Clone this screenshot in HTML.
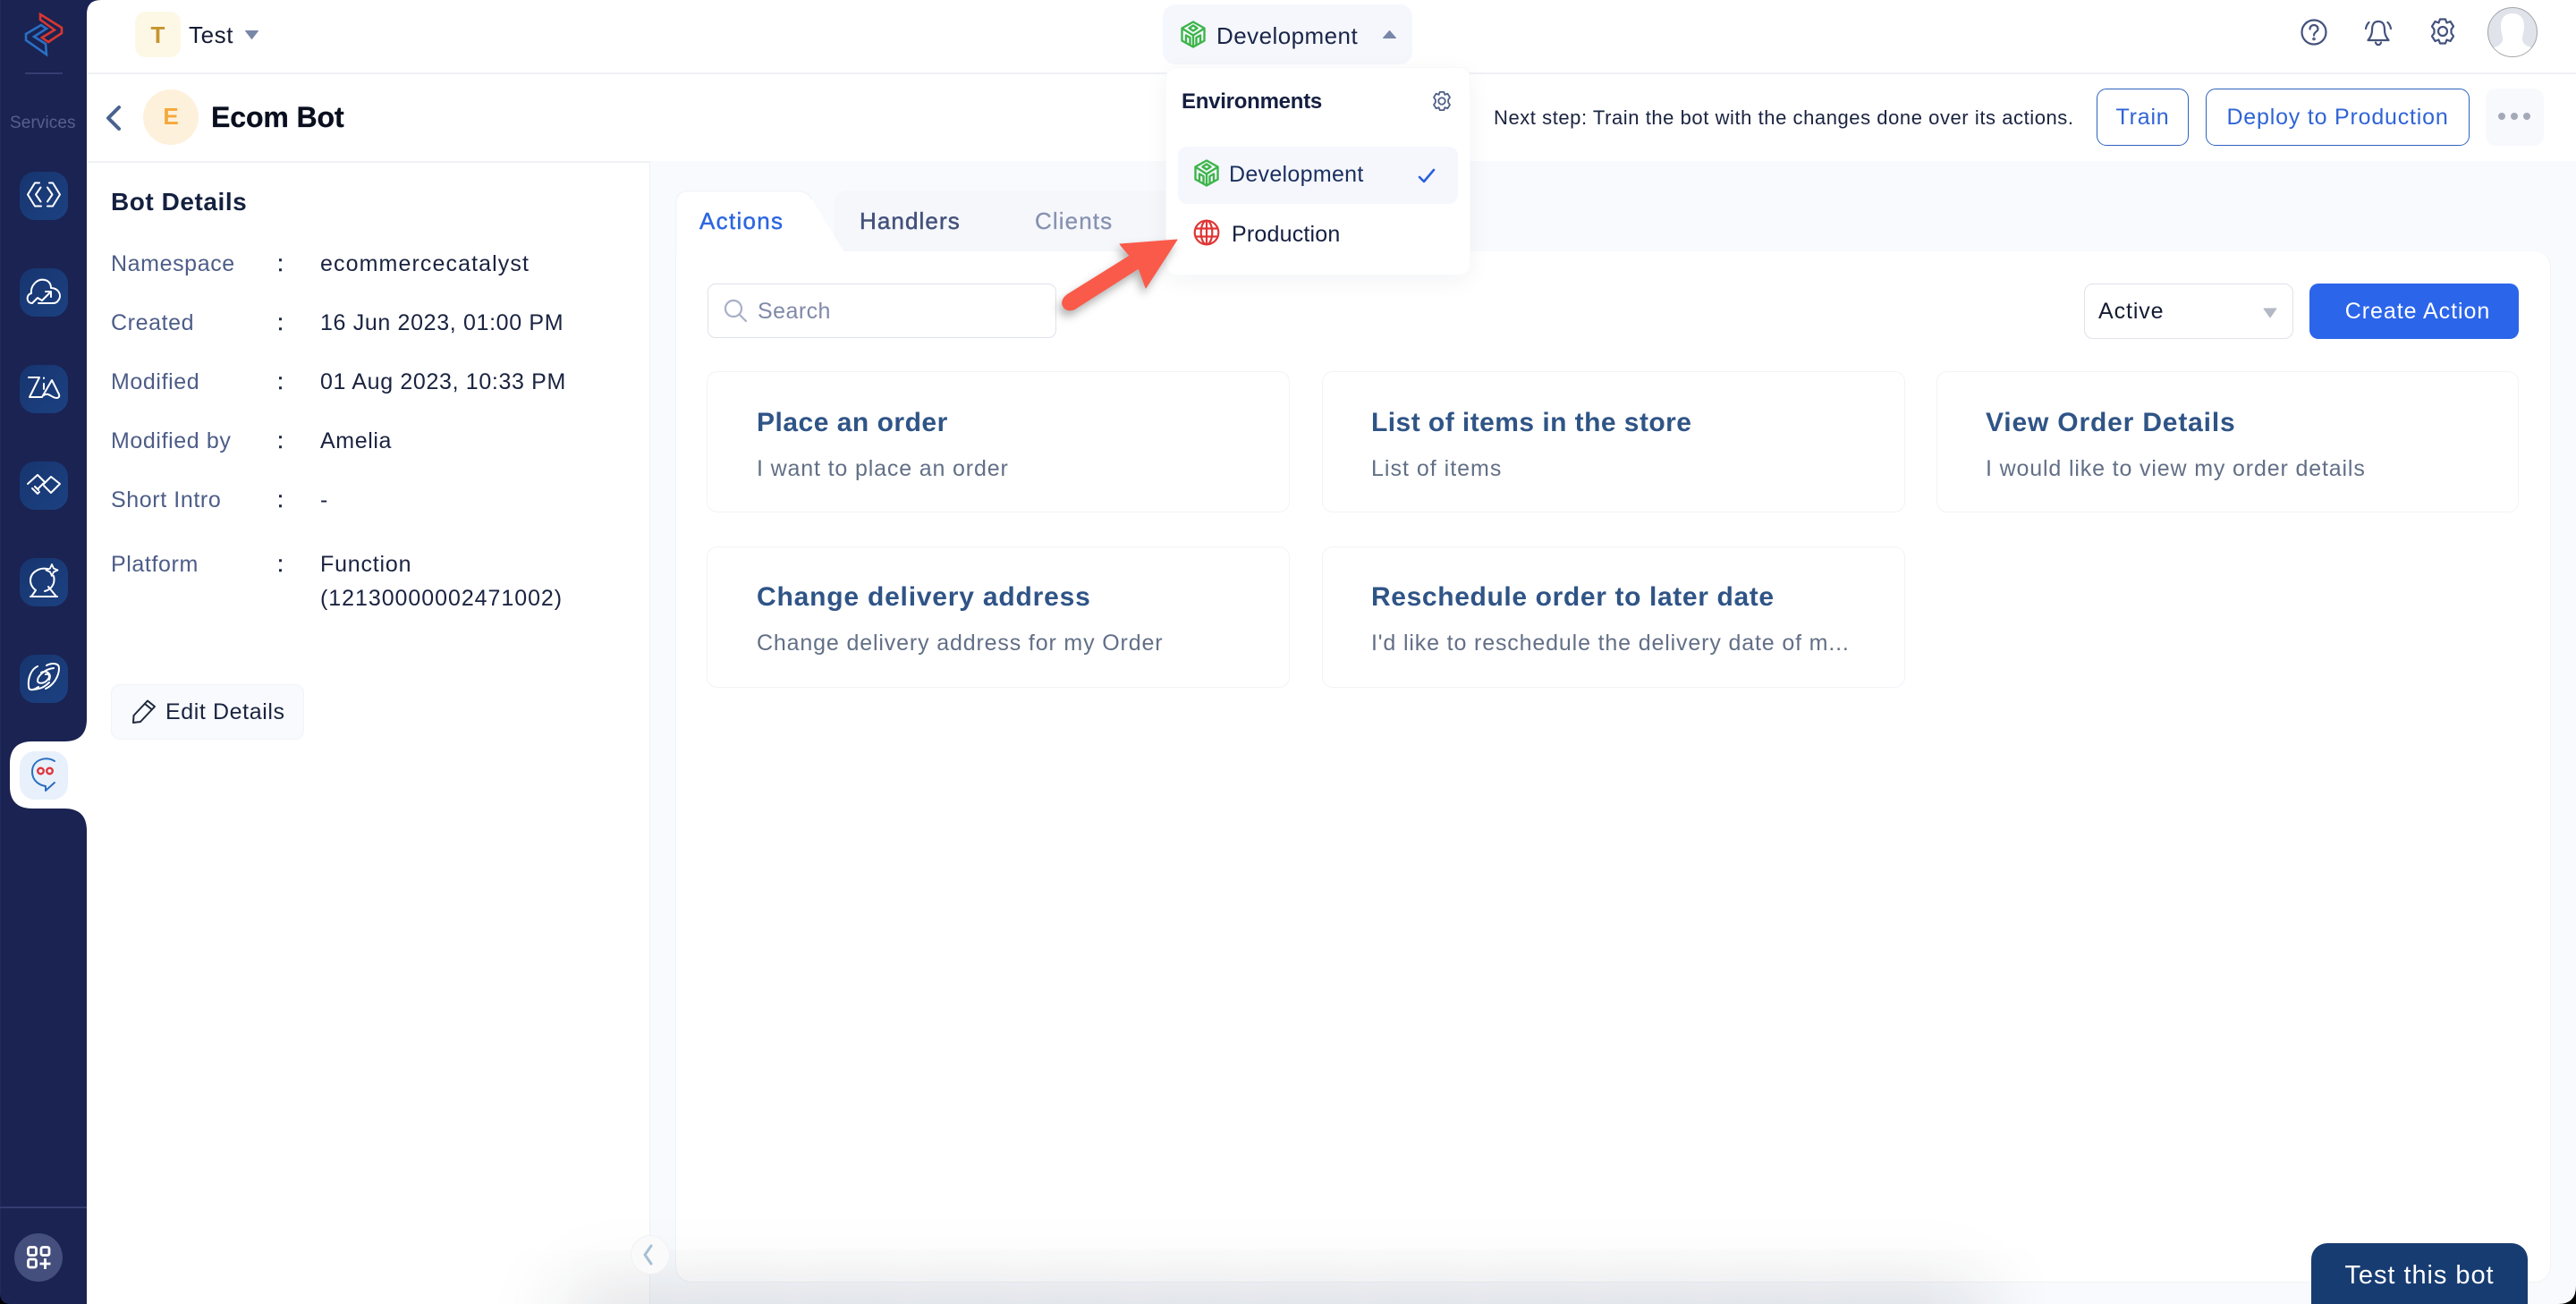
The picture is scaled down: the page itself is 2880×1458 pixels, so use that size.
<!DOCTYPE html>
<html><head><meta charset="utf-8"><title>Ecom Bot</title>
<style>
*{box-sizing:border-box;margin:0;padding:0}
html,body{width:2880px;height:1458px;overflow:hidden;background:#fff}
body{position:relative;font-family:"Liberation Sans",Arial,sans-serif;color:#1a2340}
.a{position:absolute}
.t{position:absolute;white-space:nowrap;height:40px;line-height:40px;font-size:25px;letter-spacing:.6px}
.l{color:#4d5d88;left:124px}
.c{left:310px;color:#1a2340;letter-spacing:0;-webkit-text-stroke:.5px #1a2340}
.v{left:358px;color:#1a2340}
.tile{position:absolute;left:22px;width:54px;height:54px;border-radius:17px;background:linear-gradient(135deg,#17356f,#1c4181)}
.tile svg{position:absolute;left:0;top:0;fill:none;stroke:#fff;stroke-width:2;stroke-linejoin:round;stroke-linecap:round}
.card{position:absolute;width:652px;height:158px;border:1.5px solid #f1f3f7;border-radius:12px;background:#fff}
.h{color:#2f5486;font-weight:bold;font-size:30px;letter-spacing:.5px}
.s{color:#626f86;font-size:25px;letter-spacing:.85px}
.btn{position:absolute;border:1.5px solid #2e62bf;border-radius:11px;background:#fff;color:#2f64d6;text-align:center;font-size:25px;letter-spacing:.8px;height:64px;line-height:63px;top:99px}
</style></head><body>

<!-- right strip and content bg -->
<div class="a" style="left:726px;top:180px;width:2154px;height:1278px;background:#f8fafd;border-left:1.5px solid #eff1f6"></div>
<div class="a" style="left:97px;top:180px;width:629px;height:1278px;background:#fff"></div>

<!-- tabs -->
<div class="a" style="left:933px;top:213px;width:370px;height:68px;background:#f5f7fb;border-radius:14px 0 0 0"></div>
<!-- main card -->
<div class="a" style="left:755px;top:281px;width:2097px;height:1153px;background:#fff;border-radius:0 18px 18px 18px;border:1.5px solid #f0f2f6;border-top:none"></div>
<svg class="a" style="left:750px;top:208px" width="210" height="80"><path d="M5 76V20Q5 5 20 5H142Q153 5 158 15L195 76Z" fill="#fff" stroke="none"/><path d="M5.7 76V20Q5.7 5.7 20 5.7H142Q153 5.7 158 15" fill="none" stroke="#f2f4f8" stroke-width="1.5"/></svg>
<div class="t" style="left:782px;top:227px;font-size:26px;letter-spacing:1.3px;color:#2b65e0;-webkit-text-stroke:.4px #2b65e0">Actions</div>
<div class="t" style="left:961px;top:227px;font-size:26px;letter-spacing:1.1px;color:#44527c;-webkit-text-stroke:.5px #44527c">Handlers</div>
<div class="t" style="left:1157px;top:227px;font-size:26px;letter-spacing:1.1px;color:#8791b0;-webkit-text-stroke:.3px #8791b0">Clients</div>

<!-- search -->
<div class="a" style="left:791px;top:317px;width:390px;height:61px;border:1.5px solid #dfe2ea;border-radius:9px;background:#fff"></div>
<svg class="a" style="left:808px;top:333px" width="28" height="28" fill="none" stroke="#a9afc6" stroke-width="2.2" stroke-linecap="round"><circle cx="12" cy="12" r="9"/><path d="M19 19L26 26"/></svg>
<div class="t" style="left:847px;top:328px;color:#8089a8;font-size:25px;letter-spacing:.45px">Search</div>

<!-- select + create -->
<div class="a" style="left:2330px;top:317px;width:234px;height:62px;border:1.5px solid #dfe2ea;border-radius:10px;background:#fff"></div>
<div class="t" style="left:2346px;top:328px;color:#141c33;font-size:25px;letter-spacing:.9px">Active</div>
<svg class="a" style="left:2530px;top:344px" width="16" height="12"><path d="M1 1H15L8 11Z" fill="#b4b8c4" stroke="#b4b8c4" stroke-linejoin="round"/></svg>
<div class="a" style="left:2582px;top:317px;width:234px;height:62px;background:#2b65ea;border-radius:10px;color:#fff;text-align:center;line-height:63px;font-size:25px;letter-spacing:.95px;padding-left:8px">Create Action</div>

<!-- cards -->
<div class="card" style="left:790px;top:415px"></div>
<div class="card" style="left:1478px;top:415px"></div>
<div class="card" style="left:2165px;top:415px;width:651px"></div>
<div class="card" style="left:790px;top:611px"></div>
<div class="card" style="left:1478px;top:611px"></div>
<div class="t h" style="left:846px;top:453px;letter-spacing:.5px">Place an order</div>
<div class="t s" style="left:846px;top:504px">I want to place an order</div>
<div class="t h" style="left:1533px;top:453px;letter-spacing:.45px">List of items in the store</div>
<div class="t s" style="left:1533px;top:504px;letter-spacing:1px">List of items</div>
<div class="t h" style="left:2220px;top:453px;letter-spacing:.83px">View Order Details</div>
<div class="t s" style="left:2220px;top:504px">I would like to view my order details</div>
<div class="t h" style="left:846px;top:648px;letter-spacing:.8px">Change delivery address</div>
<div class="t s" style="left:846px;top:699px">Change delivery address for my Order</div>
<div class="t h" style="left:1533px;top:648px;letter-spacing:.63px">Reschedule order to later date</div>
<div class="t s" style="left:1533px;top:699px">I'd like to reschedule the delivery date of m...</div>

<!-- bottom shadow -->
<div class="a" style="left:0;top:1300px;width:2880px;height:158px;overflow:hidden;pointer-events:none"><div class="a" style="left:680px;top:190px;width:1490px;height:30px;box-shadow:0 0 90px 45px rgba(30,35,55,.17);background:rgba(30,35,55,.17)"></div></div>

<!-- collapse -->
<div class="a" style="left:705px;top:1381px;width:44px;height:44px;border-radius:50%;background:#fafafb;border:1px solid #f0f1f4"></div>
<svg class="a" style="left:716px;top:1390px" width="20" height="26" fill="none" stroke="#a5bfd6" stroke-width="3" stroke-linecap="round" stroke-linejoin="round"><path d="M12 3L5 13L12 23"/></svg>

<!-- top header -->
<div class="a" style="left:97px;top:0;width:2783px;height:180px;background:#fff"></div>
<div class="a" style="left:97px;top:81px;width:2783px;height:1.5px;background:#eff1f5"></div>
<div class="a" style="left:97px;top:180px;width:629px;height:1.5px;background:#eff1f5"></div>
<div class="a" style="left:151px;top:13px;width:51px;height:51px;border-radius:12px;background:#fdf8e6;color:#c6952f;font-weight:bold;font-size:26px;text-align:center;line-height:52px">T</div>
<div class="t" style="left:211px;top:19px;font-size:26px;letter-spacing:.6px;color:#141c33">Test</div>
<svg class="a" style="left:273px;top:33px" width="17" height="12"><path d="M1.5 1.5H15.5L8.5 10.5Z" fill="#7886a8" stroke="#7886a8" stroke-linejoin="round"/></svg>

<svg class="a" style="left:116px;top:116px" width="22" height="32" fill="none" stroke="#4a638f" stroke-width="4" stroke-linecap="round" stroke-linejoin="round"><path d="M17 4L5 16L17 28"/></svg>
<div class="a" style="left:160px;top:100px;width:62px;height:62px;border-radius:50%;background:#fdf1dc;color:#f5a83a;font-weight:bold;font-size:26px;text-align:center;line-height:60px">E</div>
<div class="t" style="left:236px;top:111px;font-size:32px;font-weight:bold;letter-spacing:-.1px;color:#0a0f1f;-webkit-text-stroke:.3px #0a0f1f">Ecom Bot</div>

<!-- env button -->
<div class="a" style="left:1300px;top:5px;width:279px;height:67px;background:#f5f7fd;border-radius:14px"></div>
<svg class="a" style="left:1320px;top:23px" width="28" height="31" viewBox="0 0 28 31" fill="none" stroke="#3db54a" stroke-width="2.4" stroke-linejoin="round"><path d="M14 1.5L26.5 8.5V22.5L14 29.5L1.5 22.5V8.5Z"/><path d="M14 5.5L18.5 8.5L14 11.5L9.5 8.5Z"/><path d="M2 9L14 16.5L26 9M14 16.5V29M6 25V16.5L10.5 19V27.5M22 25V16.5L17.5 19V27.5"/></svg>
<div class="t" style="left:1360px;top:20px;font-size:26px;letter-spacing:.45px;color:#1a2547">Development</div>
<svg class="a" style="left:1545px;top:33px" width="17" height="11"><path d="M1.5 9.5H15.5L8.5 1.5Z" fill="#7886a8" stroke="#7886a8" stroke-linejoin="round"/></svg>

<!-- next step -->
<div class="t" style="left:1670px;top:112px;font-size:22px;letter-spacing:.56px;color:#1a2340">Next step: Train the bot with the changes done over its actions.</div>
<div class="btn" style="left:2344px;width:103px">Train</div>
<div class="btn" style="left:2466px;width:295px">Deploy to Production</div>
<div class="a" style="left:2779px;top:99px;width:65px;height:64px;border-radius:11px;background:#f8f9fc"></div>
<div class="a" style="left:2793px;top:126px;width:8px;height:8px;border-radius:50%;background:#a4a9b8"></div>
<div class="a" style="left:2807px;top:126px;width:8px;height:8px;border-radius:50%;background:#a4a9b8"></div>
<div class="a" style="left:2821px;top:126px;width:8px;height:8px;border-radius:50%;background:#a4a9b8"></div>

<!-- top right icons -->
<svg class="a" style="left:2571px;top:20px" width="32" height="32" fill="none" stroke="#44527c" stroke-width="2.2" stroke-linecap="round"><circle cx="16" cy="16" r="13.5"/><path d="M11.5 12.5C11.5 6.5 20.5 6.5 20.5 12.5C20.5 15.5 16 15.5 16 19.5"/><circle cx="16" cy="23.5" r=".7"/></svg>
<svg class="a" style="left:2643px;top:20px" width="32" height="32" fill="none" stroke="#44527c" stroke-width="2.2" stroke-linecap="round" stroke-linejoin="round"><path d="M16 4C10 4 9 9 9 14C9 19 7 22 4.5 25H27.5C25 22 23 19 23 14C23 9 22 4 16 4Z"/><path d="M13 27.5C14 31 18 31 19 27.5M5.5 5C3.5 7 2.5 9 2 12M26.5 5C28.5 7 29.5 9 30 12"/></svg>
<svg class="a" style="left:2715px;top:19px" width="32" height="32" viewBox="0 0 32 32" fill="none" stroke="#44527c" stroke-width="2.2" stroke-linejoin="round"><path d="M13 2.5H19L20.5 6.5L24.5 5L28 10.5L25.5 14V18L28 21.5L24.5 27L20.5 25.5L19 29.5H13L11.5 25.5L7.5 27L4 21.5L6.5 18V14L4 10.5L7.5 5L11.5 6.5Z"/><circle cx="16" cy="16" r="5"/></svg>
<div class="a" style="left:2781px;top:8px;width:56px;height:56px;border-radius:50%;border:1.2px solid #a2a4aa;background:#e0e3ea;overflow:hidden">
<svg width="54" height="54" style="display:block"><path d="M27 6C18 6 14 12 14 20C14 28 17 33 16 36C15 40 11 43 6 44V56H48V44C43 43 39 40 38 36C37 33 40 28 40 20C40 12 36 6 27 6Z" fill="#fff"/></svg></div>

<!-- sidebar -->
<svg class="a" style="left:0;top:0" width="97" height="1458"><path d="M0 0H97V804Q97 829 72 829H36Q11 829 11 854V879Q11 904 36 904H72Q97 904 97 929V1458H0Z" fill="#1a2352"/><path d="M0 0V1458" stroke="#202b5e" stroke-width="2"/></svg>
<svg class="a" style="left:97px;top:0" width="16" height="16"><path d="M0 0H16Q0 0 0 16Z" fill="#1a2352"/></svg>
<svg class="a" style="left:20px;top:10px" width="60" height="58" fill="none" stroke-width="2.6" stroke-linejoin="miter"><path d="M25 6L49 21V27L34 37L27 32L41 23.5L25 12Z" stroke="#d9362f"/><path d="M9 28L26 18L32 22L18 31L31 39L32 51L9 35Z" stroke="#2a6fc4"/></svg>
<div class="a" style="left:28px;top:81px;width:42px;height:1.5px;background:#343e70"></div>
<div class="t" style="left:11px;top:118px;font-size:19px;letter-spacing:.1px;color:#56608f">Services</div>

<div class="tile" style="top:192px"><svg width="54" height="54"><path d="M22 12.5H17L9 25.5L17 38.5H24M33 12.5H37L45 25.5L37 38.5H31M23.5 17.5L18 25.5L23.5 33.5M31 17.5L36.5 25.5L31 33.5"/></svg></div>
<div class="tile" style="top:300px"><svg width="54" height="54"><path d="M14 39C7 39 7 29 13 28C12 20 19 11 28 13C33 14 35 18 35 22C43 22 48 30 43 36C42 38 40 39 37 39H21M14 39L20 33L25 36L34 27M29 26H35V32"/></svg></div>
<div class="tile" style="top:408px"><svg width="54" height="54"><path d="M10 14H22L11 36H24M27 21L27 27M27 14.5V15M25 36L36 17L44 33C45 36 43 37 41 37C36 37 32 30 27 34"/></svg></div>
<div class="tile" style="top:516px"><svg width="54" height="54"><path d="M9 25L20 15L28 23L21 30M27 25L35 17L45 25L35 35L27 27M14 30L18 34M17 28L21 32M20 36L22 34M17 33L20 36"/></svg></div>
<div class="tile" style="top:624px"><svg width="54" height="54"><path d="M31 12C22 10 12 16 12 25C12 30 15 34 18 36M38 20C40 28 36 35 28 37M13 43L18 36M41 43L32 32M12 43H42"/><path d="M36 7L38 11.5L42.5 13.5L38 15.5L36 20L34 15.5L29.5 13.5L34 11.5Z" stroke-width="1.8"/></svg></div>
<div class="tile" style="top:732px"><svg width="54" height="54"><path d="M30 12C36 9 44 9 44 15C44 24 38 34 29 38M20 13C13 16 9 26 10 35C10 41 15 40 21 36M38 15C28 16 20 24 20 29C20 33 28 33 32 27C34 24 33 21 29 22M24 20C30 17 36 21 33 28M16 39C24 38 28 36 33 31"/></svg></div>
<div class="tile" style="top:840px;background:#e8f0fb"><svg width="54" height="54" style="stroke:#2a6fc0"><path d="M39 11C30 5 14 9 14 23C14 33 22 38 29 39L29 44L39 35"/><circle cx="23.5" cy="22" r="3.3" stroke="#e0343a" stroke-width="2.4"/><circle cx="33.5" cy="22" r="3.3" stroke="#e0343a" stroke-width="2.4"/></svg></div>

<div class="a" style="left:0;top:1349px;width:97px;height:1.5px;background:#343e70"></div>
<div class="a" style="left:16px;top:1379px;width:54px;height:54px;border-radius:50%;background:#454f7d"></div>
<svg class="a" style="left:16px;top:1379px" width="54" height="54" fill="none" stroke="#fff" stroke-width="2.8"><rect x="15.5" y="15.5" width="9" height="9" rx="2"/><rect x="30" y="15.5" width="9" height="9" rx="2"/><rect x="15.5" y="29" width="9" height="9" rx="2"/><path d="M34.5 28V40M28.5 34H40.5"/></svg>

<!-- dropdown -->
<div class="a" style="left:1303px;top:75px;width:341px;height:233px;background:#fff;border-radius:12px;box-shadow:0 6px 26px rgba(25,35,70,.05);border:1px solid #f8f9fb"></div>
<div class="t" style="left:1321px;top:94px;font-size:24px;font-weight:bold;letter-spacing:-.25px;color:#141f40">Environments</div>
<svg class="a" style="left:1600px;top:101px" width="24" height="24" viewBox="0 0 32 32" fill="none" stroke="#4f5f86" stroke-width="2.4" stroke-linejoin="round"><path d="M13 2.5H19L20.5 6.5L24.5 5L28 10.5L25.5 14V18L28 21.5L24.5 27L20.5 25.5L19 29.5H13L11.5 25.5L7.5 27L4 21.5L6.5 18V14L4 10.5L7.5 5L11.5 6.5Z"/><circle cx="16" cy="16" r="5"/></svg>
<div class="a" style="left:1317px;top:164px;width:313px;height:64px;background:#f5f7fd;border-radius:10px"></div>
<svg class="a" style="left:1335px;top:178px" width="28" height="31" viewBox="0 0 28 31" fill="none" stroke="#3db54a" stroke-width="2.4" stroke-linejoin="round"><path d="M14 1.5L26.5 8.5V22.5L14 29.5L1.5 22.5V8.5Z"/><path d="M14 5.5L18.5 8.5L14 11.5L9.5 8.5Z"/><path d="M2 9L14 16.5L26 9M14 16.5V29M6 25V16.5L10.5 19V27.5M22 25V16.5L17.5 19V27.5"/></svg>
<div class="t" style="left:1374px;top:175px;font-size:25px;letter-spacing:.3px;color:#1a2f5f">Development</div>
<svg class="a" style="left:1584px;top:187px" width="22" height="20" fill="none" stroke="#2b5fe0" stroke-width="2.6" stroke-linecap="round" stroke-linejoin="round"><path d="M3 11L8 16L19 3"/></svg>
<svg class="a" style="left:1334px;top:245px" width="30" height="30" fill="none" stroke="#df3535" stroke-width="2.2"><circle cx="15" cy="15" r="13.3"/><ellipse cx="15" cy="15" rx="6.3" ry="13.3"/><path d="M2 10.5H28M2 19.5H28M15 2V28"/></svg>
<div class="t" style="left:1377px;top:242px;font-size:25px;letter-spacing:.2px;color:#141f40">Production</div>

<!-- arrow -->
<svg class="a" style="left:1170px;top:250px;filter:drop-shadow(-3px 6px 5px rgba(60,60,60,.4))" width="160" height="120"><path d="M146 18L82 23L93 36L24 79C18 83 16 89 19 93C22 98 29 98 34 94L103 50L111 72Z" fill="#fa5a4a" stroke="#fa5a4a" stroke-linejoin="round"/></svg>

<!-- left details -->
<div class="t" style="left:124px;top:206px;font-size:28px;font-weight:bold;letter-spacing:.55px;color:#14203f">Bot Details</div>
<div class="t l" style="top:275px">Namespace</div><div class="t c" style="top:275px">:</div><div class="t v" style="top:275px;letter-spacing:1.1px">ecommercecatalyst</div>
<div class="t l" style="top:341px">Created</div><div class="t c" style="top:341px">:</div><div class="t v" style="top:341px;letter-spacing:.65px">16 Jun 2023, 01:00 PM</div>
<div class="t l" style="top:407px">Modified</div><div class="t c" style="top:407px">:</div><div class="t v" style="top:407px;letter-spacing:.65px">01 Aug 2023, 10:33 PM</div>
<div class="t l" style="top:473px">Modified by</div><div class="t c" style="top:473px">:</div><div class="t v" style="top:473px">Amelia</div>
<div class="t l" style="top:539px">Short Intro</div><div class="t c" style="top:539px">:</div><div class="t v" style="top:539px">-</div>
<div class="t l" style="top:611px">Platform</div><div class="t c" style="top:611px">:</div><div class="t v" style="top:611px;letter-spacing:.8px">Function</div>
<div class="t v" style="top:649px;letter-spacing:.95px">(12130000002471002)</div>
<div class="a" style="left:124px;top:765px;width:216px;height:62px;background:#f8fafd;border:1.5px solid #f1f3f8;border-radius:10px"></div>
<svg class="a" style="left:146px;top:780px" width="30" height="30" fill="none" stroke="#20283c" stroke-width="2" stroke-linejoin="round"><path d="M3 28L3.5 20L19 3.5L27 10L11 27Z"/><path d="M16 7L24 13.5"/></svg>
<div class="t" style="left:185px;top:776px;font-size:25px;letter-spacing:.6px;color:#1a2340">Edit Details</div>

<!-- test bot -->
<div class="a" style="left:2584px;top:1390px;width:242px;height:68px;background:#173c72;border-radius:18px 18px 0 0;color:#fff;text-align:center;font-size:29px;letter-spacing:.95px;line-height:72px">Test this bot</div>

<!-- window corners -->
<svg class="a" style="left:0;top:1438px" width="20" height="20"><path d="M0 8V20H12Q0 20 0 8Z" fill="#000"/></svg>
<svg class="a" style="left:2860px;top:1438px" width="20" height="20"><path d="M20 0V20H0Q20 20 20 0Z" fill="#000"/></svg>
</body></html>
